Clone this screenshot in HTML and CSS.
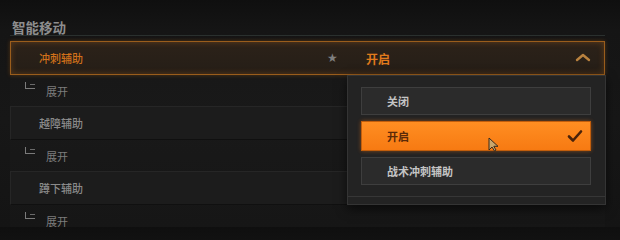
FILE: index.html
```html
<!DOCTYPE html>
<html lang="zh">
<head>
<meta charset="utf-8">
<link rel="stylesheet" href="styles.css">
</head>
<body>
<div class="page">
  <h1 class="title">智能移动</h1>
  <div class="list">
    <div class="row active">
      <span class="label">冲刺辅助</span>
      <span class="star">★</span>
      <span class="value">开启</span>
      <svg class="caret" width="16" height="10" viewBox="0 0 16 10"><path d="M2 8 L8 3 L14 8" fill="none" stroke="#b9823f" stroke-width="2.4" stroke-linecap="round" stroke-linejoin="round"/></svg>
    </div>
    <div class="sub"><span class="corner"></span><span class="subtext">展开</span></div>
    <div class="row">
      <span class="label">越障辅助</span>
    </div>
    <div class="sub"><span class="corner"></span><span class="subtext">展开</span></div>
    <div class="row">
      <span class="label">蹲下辅助</span>
    </div>
    <div class="sub"><span class="corner"></span><span class="subtext">展开</span></div>
  </div>

  <div class="dropdown">
    <div class="option">关闭</div>
    <div class="option selected">
      <span>开启</span>
      <svg class="check" width="16" height="14" viewBox="0 0 16 14"><path d="M2 7.5 L6 11.5 L14 2.5" fill="none" stroke="#4a220a" stroke-width="2.6" stroke-linecap="round" stroke-linejoin="round"/></svg>
    </div>
    <div class="option">战术冲刺辅助</div>
    <svg class="cursor" width="11" height="15" viewBox="0 0 11 15"><path d="M1 1 L1 13 L4 10 L6.5 14 L8 13 L5.8 9.3 L10 9.3 Z" fill="#c9a66c" stroke="#3a2a1a" stroke-width="1" stroke-linejoin="round"/></svg>
  </div>
</div>
</body>
</html>
```

FILE: styles.css
```css
html, body {
  margin: 0;
  padding: 0;
}
body {
  width: 620px;
  height: 227px;
  overflow: hidden;
  background: linear-gradient(180deg, #0f0f0f 0px, #151515 30px, #171717 120px, #141414 227px);
  font-family: "Noto Sans CJK SC", "Noto Sans", sans-serif;
}
.page {
  position: relative;
  padding: 0 15px 0 10px;
}
.title {
  margin: 0;
  padding: 20px 0 0 2px;
  height: 15px;
  font-size: 13.5px;
  line-height: 15px;
  font-weight: 700;
  color: #8e8e8e;
  border-bottom: 1px solid #2a302e;
}
.list {
  margin-top: 5px;
  display: flex;
  flex-direction: column;
}
.row {
  height: 32px;
  display: flex;
  align-items: center;
  padding-left: 28px;
  background: #1c1c1c;
  border: 1px solid #262626;
  border-bottom-color: #101010;
  color: #8a8a8a;
  font-size: 11px;
  font-weight: 500;
}
.row .label {
  width: 288px;
  flex: 0 0 288px;
}
.row.active {
  background: linear-gradient(180deg, #2c2219 0%, #251e17 100%);
  border: 1px solid #9a5d1c;
  box-shadow: inset 0 0 6px rgba(255, 140, 30, 0.25), 0 0 4px rgba(200, 110, 20, 0.35);
  color: #d0701a;
}
.star {
  flex: 0 0 12px;
  color: #7f7f7f;
  font-size: 12px;
  line-height: 12px;
  font-family: "DejaVu Sans", sans-serif;
}
.value {
  flex: 1;
  margin-left: 27px;
  color: #e07a1c;
  font-size: 12px;
  font-weight: 700;
}
.caret {
  margin-right: 13px;
  margin-top: -2px;
}
.sub {
  height: 31px;
  display: flex;
  align-items: center;
  padding-left: 15px;
  background: rgba(255, 255, 255, 0.012);
  color: #7d7d7d;
  font-size: 11px;
}
.corner {
  width: 9px;
  height: 6px;
  border-left: 1px solid #7a7a7a;
  border-bottom: 1px solid #7a7a7a;
  margin-top: -10px;
  position: relative;
}
.corner::after {
  content: "";
  display: block;
  width: 5px;
  height: 1px;
  background: #6a6a6a;
  margin: 2px 0 0 4px;
}
.subtext {
  margin-left: 11px;
  margin-top: 1px;
}
.dropdown {
  position: absolute;
  left: 347px;
  top: 75px;
  width: 230px;
  height: 107px;
  padding: 11px 14px 10px 13px;
  background: #232323;
  border: 1px solid #343434;
  box-shadow: 0 4px 10px rgba(0, 0, 0, 0.6);
  display: flex;
  flex-direction: column;
  gap: 6px;
}
.dropdown::after {
  content: "";
  position: absolute;
  left: 0;
  right: 0;
  bottom: 7px;
  height: 1px;
  background: #363636;
}
.option {
  height: 26px;
  display: flex;
  align-items: center;
  justify-content: space-between;
  padding: 0 7px 0 25px;
  background: #2b2b2b;
  border: 1px solid #3e3e3e;
  color: #c4c4c4;
  font-size: 11px;
  font-weight: 700;
}
.option.selected {
  height: 28px;
  background: linear-gradient(180deg, #ff8e22 0%, #f77a12 100%);
  border: 1px solid #c25e0c;
  box-shadow: 0 0 4px rgba(255, 120, 20, 0.45);
  color: #5a2a08;
}
.check {
  margin-right: 0;
}
.cursor {
  position: absolute;
  left: 140px;
  top: 61px;
}
```
